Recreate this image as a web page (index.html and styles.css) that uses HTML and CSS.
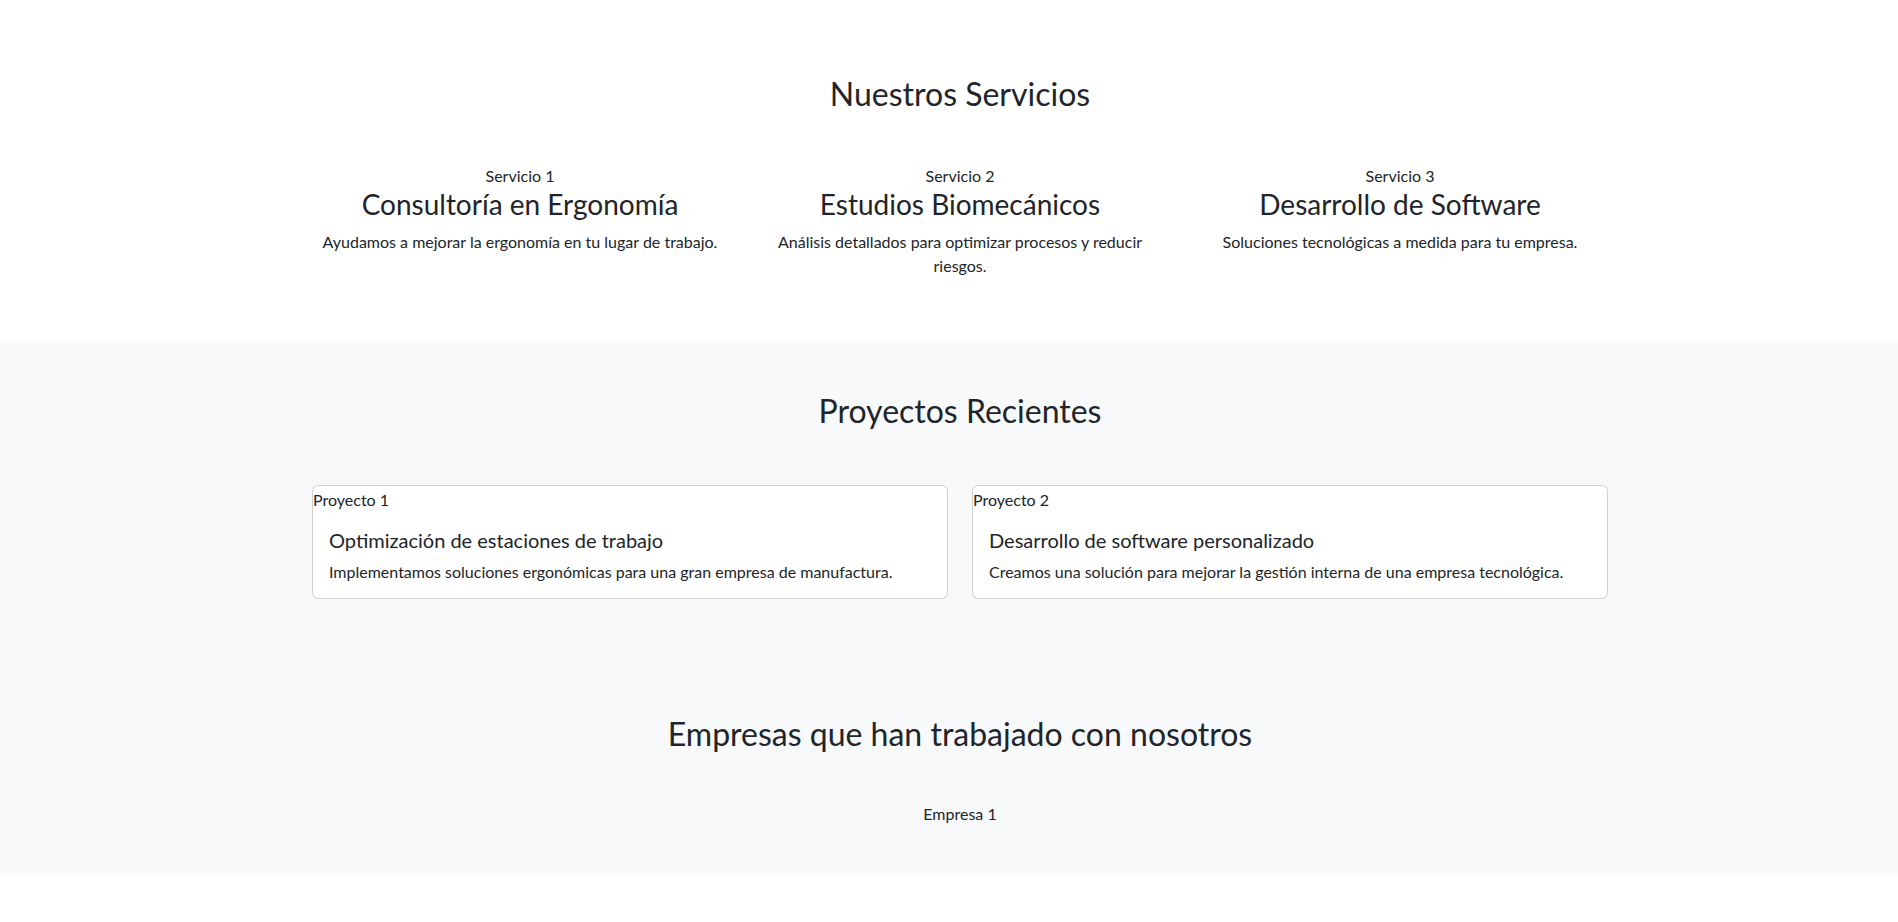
FILE: index.html
```html
<!DOCTYPE html>
<html lang="es">
<head>
<meta charset="utf-8">
<title>Servicios</title>
<link rel="stylesheet" href="styles.css">
</head>
<body>
<div class="page">
  <section class="services">
    <div class="container">
      <h2 class="section-title services-title">Nuestros Servicios</h2>
      <div class="row three">
        <div class="col service">
          <div class="alt-label">Servicio 1</div>
          <h3 class="service-title">Consultoría en Ergonomía</h3>
          <p class="service-text">Ayudamos a mejorar la ergonomía en tu lugar de trabajo.</p>
        </div>
        <div class="col service">
          <div class="alt-label">Servicio 2</div>
          <h3 class="service-title">Estudios Biomecánicos</h3>
          <p class="service-text">Análisis detallados para optimizar procesos y reducir riesgos.</p>
        </div>
        <div class="col service">
          <div class="alt-label">Servicio 3</div>
          <h3 class="service-title">Desarrollo de Software</h3>
          <p class="service-text">Soluciones tecnológicas a medida para tu empresa.</p>
        </div>
      </div>
    </div>
  </section>

  <section class="projects">
    <div class="container">
      <h2 class="section-title projects-title">Proyectos Recientes</h2>
      <div class="row two">
        <div class="col">
          <div class="card">
            <div class="card-alt">Proyecto 1</div>
            <div class="card-body">
              <h5 class="card-title">Optimización de estaciones de trabajo</h5>
              <p class="card-text">Implementamos soluciones ergonómicas para una gran empresa de manufactura.</p>
            </div>
          </div>
        </div>
        <div class="col">
          <div class="card">
            <div class="card-alt">Proyecto 2</div>
            <div class="card-body">
              <h5 class="card-title">Desarrollo de software personalizado</h5>
              <p class="card-text">Creamos una solución para mejorar la gestión interna de una empresa tecnológica.</p>
            </div>
          </div>
        </div>
      </div>
    </div>
  </section>

  <section class="clients">
    <div class="container">
      <h2 class="section-title clients-title">Empresas que han trabajado con nosotros</h2>
      <div class="carousel">
        <button class="carousel-control" aria-label="Anterior">
          <svg class="carousel-icon" viewBox="0 0 16 16" width="32" height="32"><path fill="#fff" d="M11.354 1.646a.5.5 0 0 1 0 .708L5.707 8l5.647 5.646a.5.5 0 0 1-.708.708l-6-6a.5.5 0 0 1 0-.708l6-6a.5.5 0 0 1 .708 0z"/></svg>
        </button>
        <div class="carousel-item">Empresa 1</div>
        <button class="carousel-control" aria-label="Siguiente">
          <svg class="carousel-icon" viewBox="0 0 16 16" width="32" height="32"><path fill="#fff" d="M4.646 1.646a.5.5 0 0 1 .708 0l6 6a.5.5 0 0 1 0 .708l-6 6a.5.5 0 0 1-.708-.708L10.293 8 4.646 2.354a.5.5 0 0 1 0-.708z"/></svg>
        </button>
      </div>
    </div>
  </section>
</div>
</body>
</html>
```
FILE: styles.css
```css
*,
*::before,
*::after {
  box-sizing: border-box;
}

html {
  overflow-x: hidden;
}

body {
  margin: 0;
  font-family: "Lato", "Liberation Sans", sans-serif;
  font-size: 16px;
  line-height: 1.5;
  color: #212529;
  background: #fff;
}

.page {
  width: 1920px;
}

.container {
  width: 1320px;
  margin: 0 auto;
  padding: 0 12px;
}

.section-title {
  margin: 0;
  font-size: 32px;
  font-weight: 400;
  line-height: 1.2;
  text-align: center;
}

.row {
  display: grid;
  column-gap: 24px;
}

.row.three {
  grid-template-columns: repeat(3, 1fr);
}

.row.two {
  grid-template-columns: repeat(2, 1fr);
}

.col {
  min-width: 0;
}

/* Services */
.services {
  padding: 75px 0 47px;
  background: #fff;
}

.services-title {
  margin-bottom: 51px;
}

.service {
  text-align: center;
}

.alt-label {
  line-height: 24px;
}

.service-title {
  margin: 0 0 8px;
  font-size: 28px;
  font-weight: 400;
  line-height: 1.2;
}

.service-text {
  margin: 0 0 16px;
}

/* Projects */
.projects {
  background: #f8f9fa;
  padding: 51px 0 68px;
}

.projects-title {
  margin-bottom: 55px;
}

.card {
  background: #fff;
  border: 1px solid rgba(0, 0, 0, 0.175);
  border-radius: 6px;
}

.card-alt {
  padding-top: 2px;
  line-height: 24px;
}

.card-body {
  padding: 16px 16px 14px;
}

.card-title {
  margin: 0 0 8px;
  font-size: 20px;
  font-weight: 400;
  line-height: 1.2;
}

.card-text {
  margin: 0;
}

/* Clients */
.clients {
  background: #f8f9fa;
  padding: 48px 0 47px;
}

.clients-title {
  margin-bottom: 48px;
}

.carousel {
  display: grid;
  grid-template-columns: 15% 1fr 15%;
  align-items: center;
}

.carousel-item {
  text-align: center;
  line-height: 24px;
}

.carousel-control {
  display: flex;
  align-items: center;
  justify-content: center;
  height: 24px;
  padding: 0;
  border: 0;
  background: none;
  opacity: 0.5;
  cursor: pointer;
}

.carousel-icon {
  display: block;
  flex: none;
}
```
